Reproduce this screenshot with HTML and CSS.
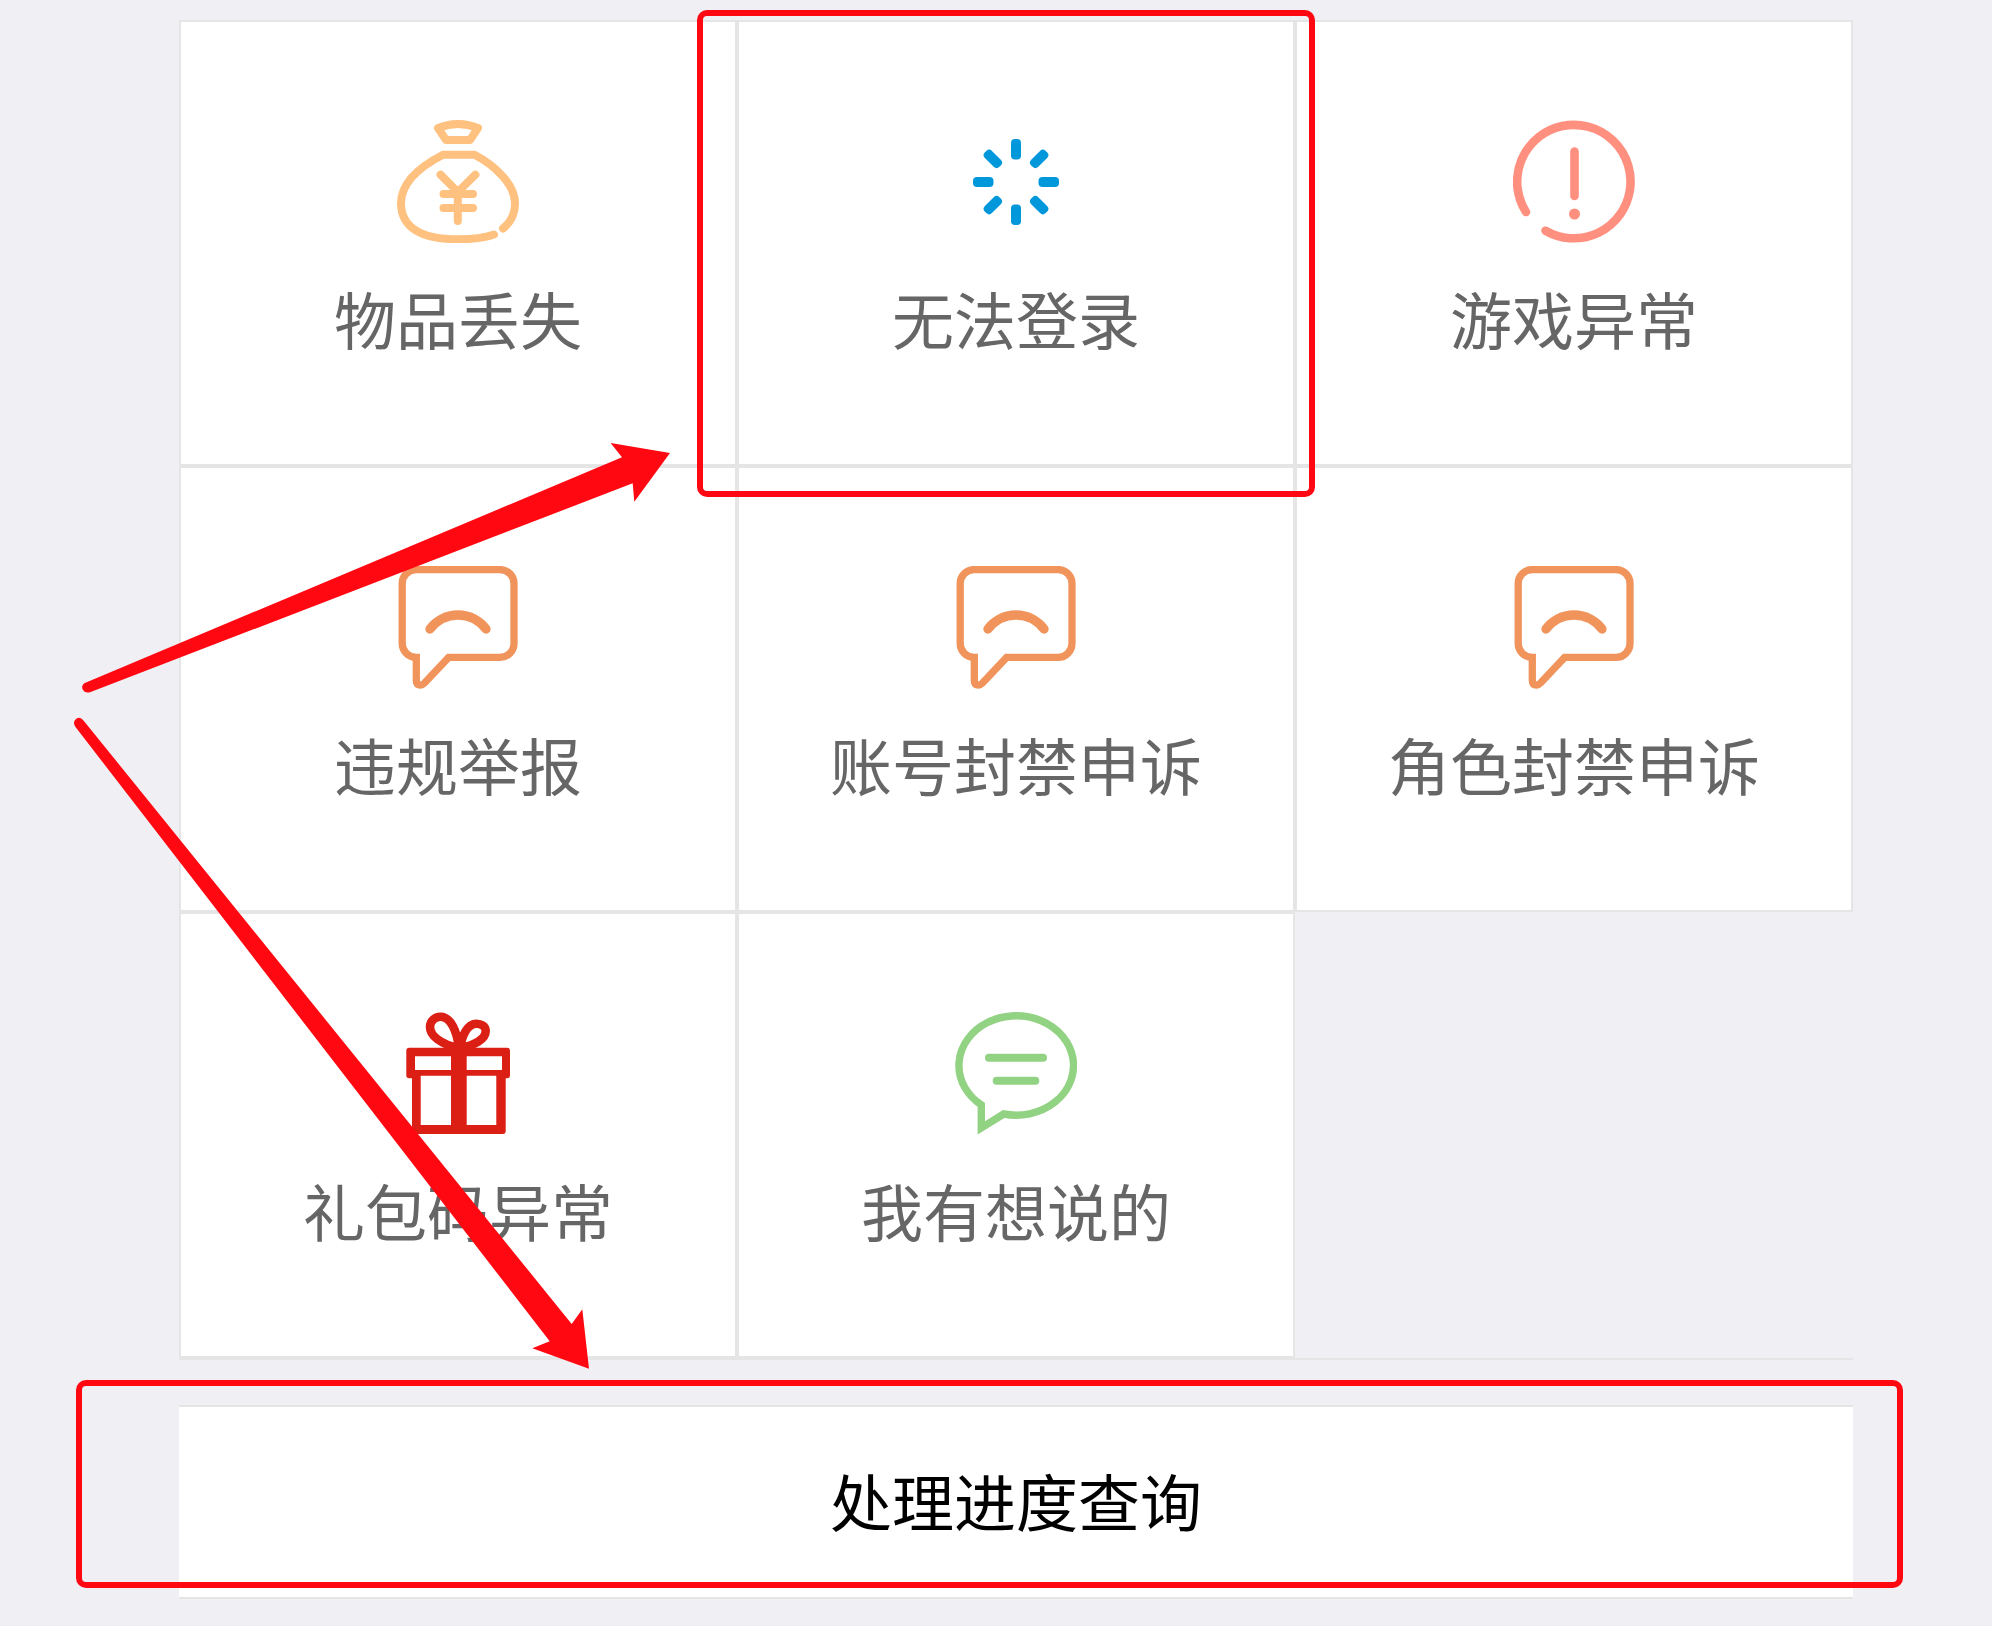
FILE: index.html
```html
<!DOCTYPE html>
<html lang="zh-CN">

<head>
  <meta charset="UTF-8">
  <meta name="viewport" content="width=device-width, initial-scale=1.0">
  <title>客服中心</title>

  <link rel="stylesheet" href="styles.css">
</head>

<body>
  <main class="service">
    <nav class="menu">
      <a class="menu-item" href="#">
        <svg class="icon bag" viewBox="0 0 122 123">
          <path d="M41 8Q61 0 81 8L73 20H49Z" />
          <path d="M97 114.5C86 118.4 73 119.3 61 119.3C27 119.3 4 109 4 83.3C4 62 24 46 46 34.7H77.6C99 46 118 65 118 83.3C118 94 113 103 106 108.5" />
          <path d="M43.5 54.7L60.8 72L78.4 54.7M60.8 72V101M46.5 74H76M46.5 88H76" />
        </svg>
        <span class="label">物品丢失</span>
      </a>
      <a class="menu-item" href="#">
        <svg class="icon loading" viewBox="0 0 122 123">
          <rect x="56" y="19" width="10" height="20.5" rx="4" />
          <rect x="56" y="19" width="10" height="20.5" rx="4" transform="rotate(45 61 62)" />
          <rect x="56" y="19" width="10" height="20.5" rx="4" transform="rotate(90 61 62)" />
          <rect x="56" y="19" width="10" height="20.5" rx="4" transform="rotate(135 61 62)" />
          <rect x="56" y="19" width="10" height="20.5" rx="4" transform="rotate(180 61 62)" />
          <rect x="56" y="19" width="10" height="20.5" rx="4" transform="rotate(225 61 62)" />
          <rect x="56" y="19" width="10" height="20.5" rx="4" transform="rotate(270 61 62)" />
          <rect x="56" y="19" width="10" height="20.5" rx="4" transform="rotate(315 61 62)" />
        </svg>
        <span class="label">无法登录</span>
        <span class="mark mark-login"></span>
      </a>
      <a class="menu-item" href="#">
        <svg class="icon warn" viewBox="0 0 122 123">
          <path d="M13 92A56.7 56.7 0 1 1 32.5 110.7M61.5 31.5V76" />
          <circle cx="61.5" cy="94" r="5.5" />
        </svg>
        <span class="label">游戏异常</span>
      </a>
      <a class="menu-item" href="#">
        <svg class="icon sad" viewBox="0 0 122 123">
          <path d="M51.6 91.4H103A14 14 0 0 0 117 77.4V17.6A14 14 0 0 0 103 3.6H19.2A14 14 0 0 0 5.2 17.6V77.4A14 14 0 0 0 19.3 91.4V114.5Q19.3 119 23.8 119Q25.5 119 27.5 117Z" />
          <path class="mouth" d="M33 63A35 35 0 0 1 89 63" />
        </svg>
        <span class="label">违规举报</span>
      </a>
      <a class="menu-item" href="#">
        <svg class="icon sad" viewBox="0 0 122 123">
          <path d="M51.6 91.4H103A14 14 0 0 0 117 77.4V17.6A14 14 0 0 0 103 3.6H19.2A14 14 0 0 0 5.2 17.6V77.4A14 14 0 0 0 19.3 91.4V114.5Q19.3 119 23.8 119Q25.5 119 27.5 117Z" />
          <path class="mouth" d="M33 63A35 35 0 0 1 89 63" />
        </svg>
        <span class="label">账号封禁申诉</span>
      </a>
      <a class="menu-item" href="#">
        <svg class="icon sad" viewBox="0 0 122 123">
          <path d="M51.6 91.4H103A14 14 0 0 0 117 77.4V17.6A14 14 0 0 0 103 3.6H19.2A14 14 0 0 0 5.2 17.6V77.4A14 14 0 0 0 19.3 91.4V114.5Q19.3 119 23.8 119Q25.5 119 27.5 117Z" />
          <path class="mouth" d="M33 63A35 35 0 0 1 89 63" />
        </svg>
        <span class="label">角色封禁申诉</span>
      </a>
      <a class="menu-item" href="#">
        <svg class="icon gift" viewBox="0 0 122 123">
          <path class="bow" d="M61 36C44 32 33 24 33 15C33 9 38 4.7 43.5 4.7C54 4.7 60 20 62 36M64 36C78 33 88.7 27 88.7 19C88.7 14 84 11.7 79.5 11.7C70 11.7 65 24 63 36" />
          <path class="box" d="M12.3 35.7H110Q113 35.7 113 38.7V63.5Q113 66.3 110 66.3H108.7V119Q108.7 122 105.7 122H18Q15 122 15 119V66.3H12.3Q9.3 66.3 9.3 63.5V38.7Q9.3 35.7 12.3 35.7ZM18 44.3V58H54V44.3ZM69.7 44.3V58H105V44.3ZM23.7 63.7V113H54V63.7ZM69.7 63.7V113H99.3V63.7Z" />
        </svg>
        <span class="label">礼包码异常</span>
      </a>
      <a class="menu-item" href="#">
        <svg class="icon talk" viewBox="0 0 122 123">
          <path d="M48.7 102L26.3 115.8V92.9A57.3 49.7 0 1 1 48.7 102Z" />
          <path class="line" d="M34 45.7H88M41.7 68.7H80.3" />
        </svg>
        <span class="label">我有想说的</span>
      </a>
    </nav>

    <a class="query" href="#">
      处理进度查询
      <span class="mark mark-query"></span>
    </a>
  </main>

  <!-- 箭头 -->
  <svg class="arrows" width="700" height="1400" viewBox="0 0 700 1400">
    <path d="M86 682.5L622 457.3L610.6 443L670 453L634.3 501.7L632.7 483.3L90 692.3Q84.5 693.5 82.5 689Q81 684.5 86 682.5Z" />
    <path d="M83.5 720.5L571.7 1324L582.3 1309.3L589 1368.7L532.3 1348.3L549.7 1341.3L75.5 727Q72 721.5 76.5 718.5Q80.5 716.5 83.5 720.5Z" />
  </svg>

</body>

</html>
```
FILE: styles.css
```css
*{
  margin: 0;
  padding: 0;
  box-sizing: border-box;
}

body {
  position: relative;
  background: #efeff4;
  font-family: "Noto Sans CJK SC", sans-serif;
  font-size: 62px;
  line-height: 90px;
}

a {
  color: inherit;
  text-decoration: none;
}

.service {
  padding: 20px 139px 27px 179px;
}

.menu {
  display: grid;
  grid-template-columns: repeat(3, 1fr);
  border-bottom: 2px solid #e5e5e5;
}

.menu-item {
  position: relative;
  display: flex;
  flex-direction: column;
  align-items: center;
  padding: 98px 0 101px;
  border: 2px solid #e5e5e5;
  background: #fff;
  color: #666;
}

.icon {
  display: block;
  width: 122px;
  height: 123px;
  fill: none;
  stroke-width: 8;
}

.label {
  margin-top: 30px;
}

.bag {
  stroke: #ffc180;
  stroke-linecap: round;
  stroke-linejoin: round;
}

.loading {
  fill: #0197db;
}

.warn {
  stroke: #ff9080;
  stroke-width: 8.6;
  stroke-linecap: round;
}

.warn circle {
  fill: #ff9080;
  stroke: none;
}

.sad {
  stroke: #f0945c;
  stroke-width: 7.3;
}

.sad .mouth {
  stroke-width: 9.3;
  stroke-linecap: round;
}

.gift .bow {
  stroke: #dc1f14;
  stroke-width: 8.6;
}

.gift .box {
  fill: #dc1f14;
  fill-rule: evenodd;
}

.talk {
  stroke: #92d283;
  stroke-width: 7.4;
}

.talk .line {
  stroke-width: 8;
  stroke-linecap: round;
}

.query {
  position: relative;
  display: block;
  margin-top: 45px;
  padding: 48px 0 52px;
  border-top: 2px solid #e5e5e5;
  border-bottom: 2px solid #e5e5e5;
  background: #fff;
  color: #000;
  text-align: center;
}

/* 红框标注 */
.mark {
  position: absolute;
  z-index: 1;
  border: 6px solid #ff0811;
  border-radius: 10px;
}

.mark-login {
  top: -12px;
  right: -22px;
  bottom: -33px;
  left: -42px;
}

.mark-query {
  top: -27px;
  right: -50px;
  bottom: 9px;
  left: -103px;
}

.arrows {
  position: absolute;
  top: 0;
  left: 0;
  z-index: 1;
  fill: #ff0811;
  pointer-events: none;
}
```
